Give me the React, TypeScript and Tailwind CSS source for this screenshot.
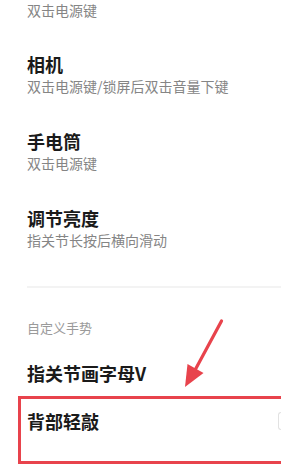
const items = [
  { title: "相机", desc: "双击电源键/锁屏后双击音量下键" },
  { title: "手电筒", desc: "双击电源键" },
  { title: "调节亮度", desc: "指关节长按后横向滑动" },
];

const App = () => {
  return (
    <div
      className="relative w-[281px] h-[464px] overflow-hidden bg-white"
      style={{ fontFamily: '"Noto Sans CJK SC", "Noto Sans", sans-serif' }}
    >
      {/* tail of the previous row */}
      <div className="pl-[27px] pb-[15px]">
        <p className="text-[14px] leading-[20px] text-[#858585]">双击电源键</p>
      </div>

      {items.map((item) => (
        <div key={item.title} className="pl-[27px] pt-[17px] pb-[16px]">
          <p className="text-[18px] leading-[24px] font-semibold text-[#1a1a1a]">
            {item.title}
          </p>
          <p className="text-[14px] leading-[20px] text-[#858585]">{item.desc}</p>
        </div>
      ))}

      {/* divider */}
      <div className="ml-[27px] mt-[20px] h-[2px] bg-[#f3f3f3]" />

      {/* section header */}
      <div className="pl-[27px] pt-[31px]">
        <p className="text-[13px] leading-[18px] text-[#9a9a9a]">自定义手势</p>
      </div>

      <div className="pl-[27px] pt-[24px] pb-[16px]">
        <p className="text-[18px] leading-[24px] font-semibold text-[#1a1a1a]">
          指关节画字母V
        </p>
      </div>

      <div className="flex items-center pl-[27px] pt-[8px]">
        <p className="text-[18px] leading-[24px] font-semibold text-[#1a1a1a]">
          背部轻敲
        </p>
        <div className="ml-auto w-[20px] h-[18px] mr-[-17px] border-l border-y border-[#e2e2e2] rounded-l-[3px]" />
      </div>

      {/* annotation: highlight box */}
      <div className="absolute left-[18px] top-[396px] w-[400px] h-[68px] border-[3px] border-[#e8434c]" />

      {/* annotation: arrow */}
      <svg
        className="absolute left-0 top-0"
        width="281"
        height="464"
        viewBox="0 0 281 464"
      >
        <line
          x1="221.5"
          y1="321"
          x2="194"
          y2="372"
          stroke="#e8434c"
          strokeWidth="3.2"
          strokeLinecap="round"
        />
        <polygon points="185,387 187.5,364 203.5,373" fill="#e8434c" />
      </svg>
    </div>
  );
};

export default App;
